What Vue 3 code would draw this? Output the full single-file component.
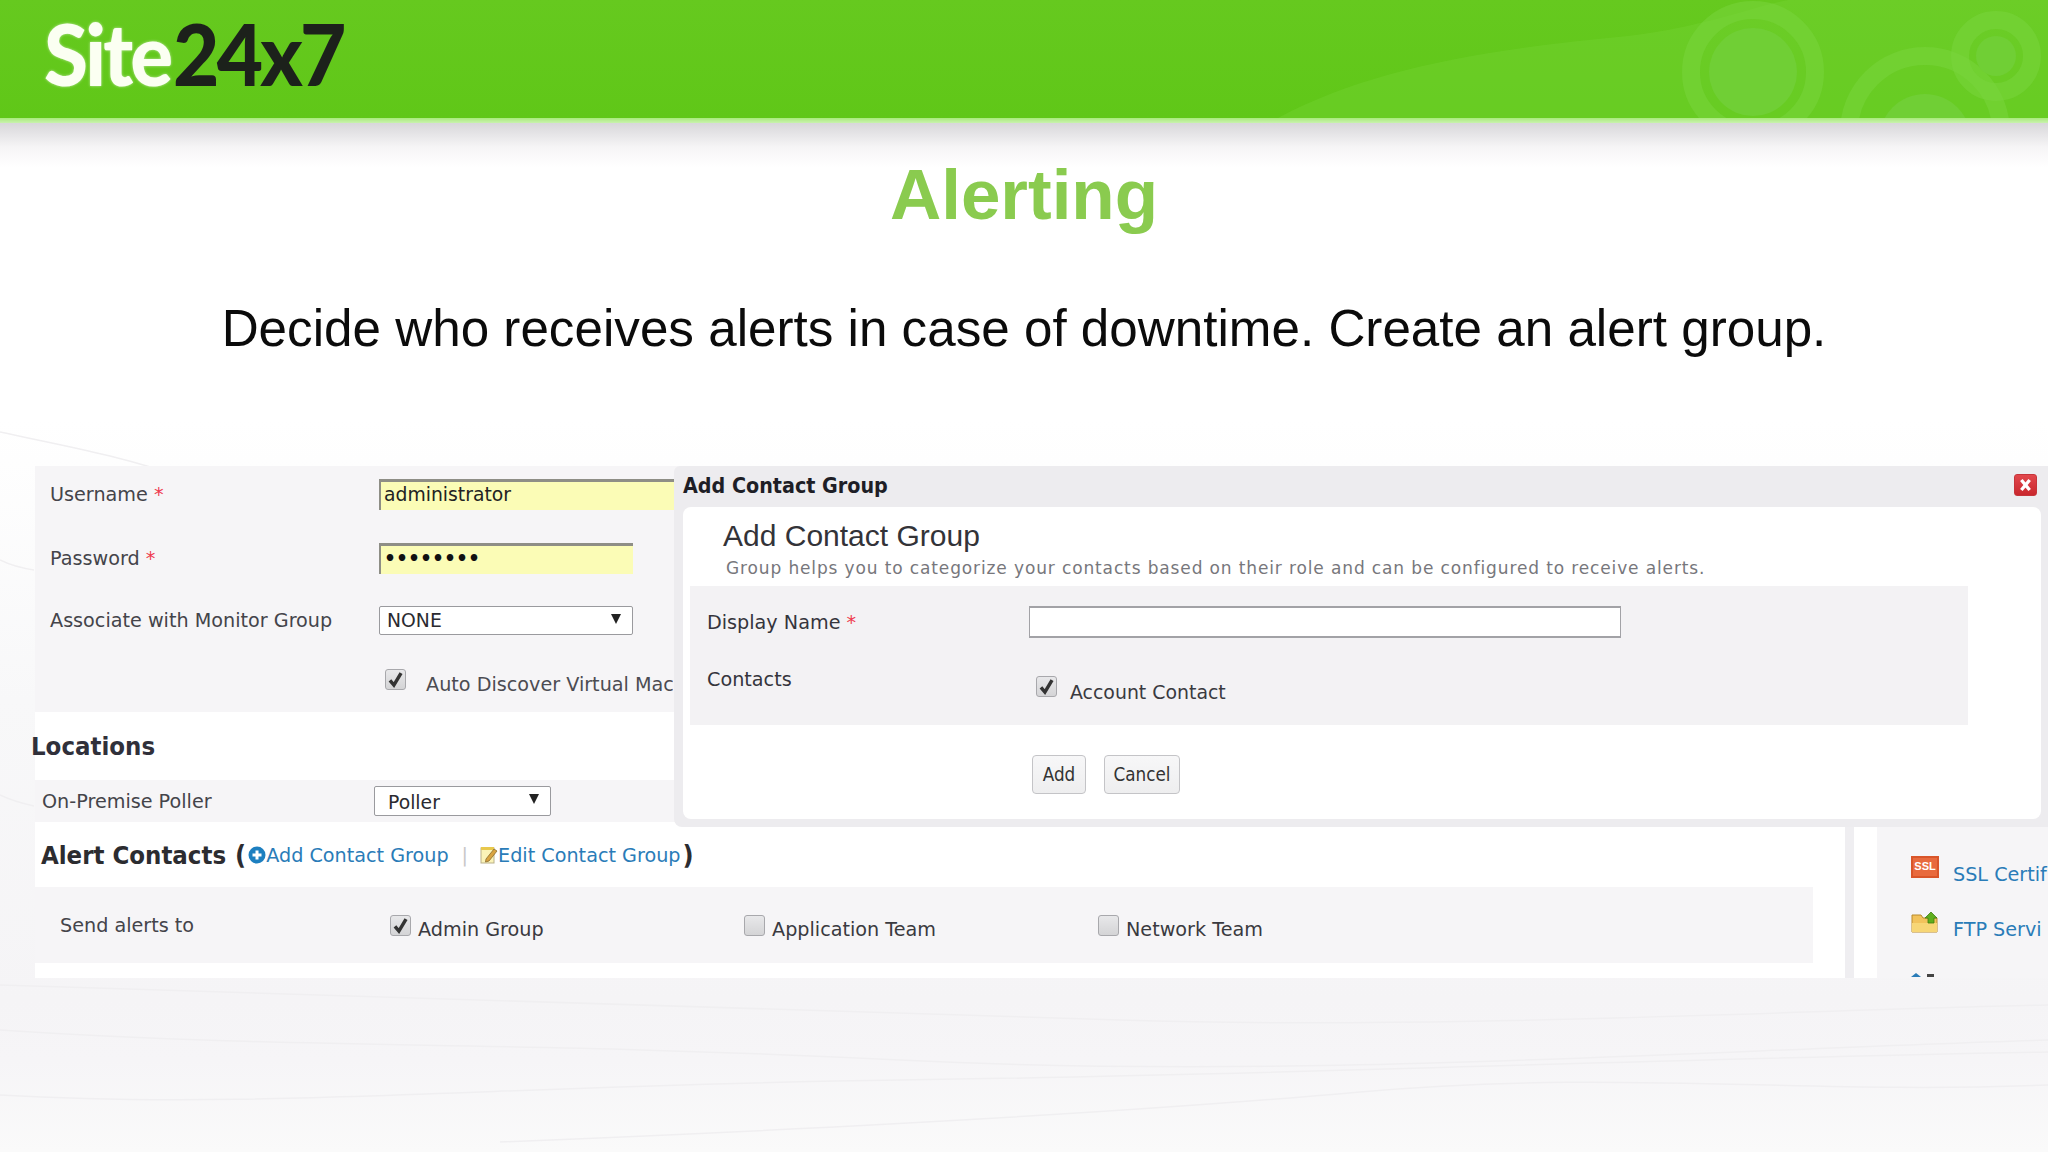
<script setup>
const alertGroups = [
  { name: 'Admin Group', checked: true, width: 354 },
  { name: 'Application Team', checked: false, width: 354 },
  { name: 'Network Team', checked: false, width: 300 }
]
</script>

<template>
  <div class="page">
    <svg class="streaks" viewBox="0 0 2048 1152" preserveAspectRatio="none" aria-hidden="true">
      <path d="M0 432 C60 445 120 455 190 480" />
      <path d="M0 560 C10 565 20 568 34 570" />
      <path d="M0 795 C10 800 20 803 34 806" />
      <path d="M0 1030 C300 1050 500 1040 900 1060 S1700 1050 2048 1040" />
      <path d="M0 1095 C260 1110 500 1085 900 1080 S1600 1060 2048 1052" />
      <path d="M500 1142 C800 1130 1100 1115 1360 1092 S1800 1095 2048 1085" />
      <path d="M0 985 C400 1000 800 1010 1120 1020 S1800 1010 2048 1005" />
    </svg>

    <header class="banner">
      <svg class="swirl" viewBox="0 0 900 118" preserveAspectRatio="none" aria-hidden="true">
        <path class="wash" d="M130 118 C220 70 330 50 480 36 C560 26 600 8 640 0 L900 0 L900 118 Z" />
        <circle class="ring-dark" cx="605" cy="72" r="62" />
        <circle class="ring-light" cx="605" cy="72" r="44" />
        <circle class="ring-dark" cx="777" cy="132" r="76" />
        <circle class="ring-light" cx="777" cy="140" r="46" />
        <circle class="ring-dark" cx="848" cy="56" r="36" />
        <circle class="ring-light" cx="848" cy="56" r="20" />
      </svg>
      <div class="logo"><span class="logo-site">Site</span><span class="logo-num">24x7</span></div>
    </header>
    <div class="banner-line"></div>
    <div class="banner-shadow"></div>

    <h1 class="title">Alerting</h1>
    <p class="lead">Decide who receives alerts in case of downtime. Create an alert group.</p>

    <section class="app">
      <div class="main">
        <div class="fields">
          <div class="field-row row-user">
            <label>Username <em>*</em></label>
            <input class="text-in autofill wide" value="administrator" readonly />
          </div>
          <div class="field-row row-pass">
            <label>Password <em>*</em></label>
            <input class="text-in autofill dots" value="••••••••" readonly />
          </div>
          <div class="field-row row-group">
            <label>Associate with Monitor Group</label>
            <div class="select select-none"><span>NONE</span><i class="caret"></i></div>
          </div>
          <div class="field-row row-auto">
            <span></span>
            <div class="check-line">
              <span class="cb on"><svg viewBox="0 0 12 12"><path d="M2.5 6.5 L5 9.5 L9.5 2" /></svg></span>
              <span class="auto-text">Auto Discover Virtual Mac</span>
            </div>
          </div>
        </div>

        <h2 class="locations">Locations</h2>
        <div class="poller-row">
          <label>On-Premise Poller</label>
          <div class="select select-poller"><span>Poller</span><i class="caret"></i></div>
        </div>

        <div class="alert-head">
          <h2>Alert Contacts</h2>
          <span class="paren open">(</span>
          <svg class="ic-add" viewBox="0 0 18 18"><circle cx="9" cy="9" r="8.5" fill="#1d7fc0" /><path d="M9 4.5v9M4.5 9h9" stroke="#fff" stroke-width="3" /></svg>
          <a>Add Contact Group</a>
          <span class="pipe">|</span>
          <svg class="ic-edit" viewBox="0 0 18 18">
            <rect x="1" y="2" width="13" height="15" fill="#fbf3b8" stroke="#b9b08a" />
            <rect x="1" y="1" width="13" height="3" fill="#e8c84c" />
            <path d="M6 13 L14 3 L17 5 L9 15 L5.5 16 Z" fill="#d9a441" stroke="#8a6b2c" stroke-width=".8" />
          </svg>
          <a>Edit Contact Group</a>
          <span class="paren close">)</span>
        </div>

        <div class="send-row">
          <label>Send alerts to</label>
          <div v-for="g in alertGroups" :key="g.name" class="send-opt" :style="{ width: g.width + 'px' }">
            <span class="cb" :class="{ on: g.checked }">
              <svg v-if="g.checked" viewBox="0 0 12 12"><path d="M2.5 6.5 L5 9.5 L9.5 2" /></svg>
            </span>
            <span class="send-name">{{ g.name }}</span>
          </div>
        </div>
      </div>

      <div class="gutter"><div class="gutter-white"></div></div>

      <aside class="side">
        <div class="side-item side-ssl">
          <span class="ssl-badge">SSL</span>
          <a>SSL Certif</a>
        </div>
        <div class="side-item side-ftp">
          <svg class="ic-ftp" viewBox="0 0 28 22">
            <path d="M1 4h9l2 3h14v14H1z" fill="#f2c35c" stroke="#b98a2a" />
            <path d="M1 12h25v9H1z" fill="#f7d676" />
            <path d="M20 1l6 6h-3v5h-6V7h-3z" fill="#5fae1d" stroke="#3f7f10" stroke-width=".8" />
          </svg>
          <a>FTP Servi</a>
        </div>
        <div class="side-bits"><i class="bit-tri"></i><i class="bit-rect"></i></div>
      </aside>

      <div class="dialog">
        <div class="dialog-bar">
          <strong>Add Contact Group</strong>
          <span class="close-btn">
            <svg viewBox="0 0 12 12"><path d="M3.5 3l5 6M8.5 3l-5 6" /></svg>
          </span>
        </div>
        <div class="dialog-body">
          <h3>Add Contact Group</h3>
          <p class="dialog-desc">Group helps you to categorize your contacts based on their role and can be configured to receive alerts.</p>
          <div class="dialog-form">
            <div class="dialog-row name-row">
              <label>Display Name <em>*</em></label>
              <input class="text-in name-in" readonly />
            </div>
            <div class="dialog-row contact-row">
              <label>Contacts</label>
              <div class="check-line account">
                <span class="cb on"><svg viewBox="0 0 12 12"><path d="M2.5 6.5 L5 9.5 L9.5 2" /></svg></span>
                <span class="account-text">Account Contact</span>
              </div>
            </div>
          </div>
          <div class="dialog-actions">
            <button class="btn add">Add</button>
            <button class="btn cancel">Cancel</button>
          </div>
        </div>
      </div>
    </section>
  </div>
</template>

<style>
html, body { margin: 0; background: #fff; }
</style>

<style scoped>
.page {
  position: relative;
  width: 2048px;
  height: 1152px;
  overflow: hidden;
  background: linear-gradient(#ffffff 0, #ffffff 420px, #f8f8f9 700px, #f5f4f6 1000px, #f6f5f7 1060px, #fafafa 1152px);
  font-family: "DejaVu Sans", Verdana, sans-serif;
  color: #3e3e44;
}
.streaks { position: absolute; inset: 0; width: 2048px; height: 1152px; }
.streaks path { fill: none; stroke: #f0eff1; stroke-width: 1.5; }

.banner {
  position: relative;
  height: 118px;
  background: linear-gradient(#66c91f, #60c718);
  overflow: hidden;
}
.swirl { position: absolute; top: 0; right: 0; width: 900px; height: 118px; }
.wash { fill: #7bd63c; opacity: .3; }
.ring-dark { fill: none; stroke: #7ad63e; stroke-width: 18; opacity: .5; }
.ring-light { fill: #70cf35; }
.logo {
  position: absolute;
  left: 44px;
  top: 11px;
  font-family: Lato, "Open Sans", sans-serif;
  font-weight: 900;
  font-size: 86px;
  line-height: 84px;
  letter-spacing: -3px;
  transform-origin: left center;
  transform: scaleX(.93);
  white-space: nowrap;
}
.logo-site { color: #fbfff2; text-shadow: 0 0 3px rgba(255,255,255,.6); }
.logo-num { color: #1c211b; margin-left: 3px; }
.banner-line { height: 5px; background: linear-gradient(#a9ea7c, #c9f2ae); }
.banner-shadow { height: 44px; background: linear-gradient(#d8d7da, #f6f5f6 55%, #fff); }

.title {
  margin: -12px 0 0;
  text-align: center;
  font-family: "Liberation Sans", Arial, sans-serif;
  font-weight: 700;
  font-size: 71px;
  line-height: 80px;
  color: #8acb4f;
}
.lead {
  margin: 63px 0 0;
  text-align: center;
  font-family: "Liberation Sans", Arial, sans-serif;
  font-size: 51.2px;
  line-height: 62px;
  color: #0b0b0b;
}

.app {
  position: absolute;
  left: 0;
  top: 466px;
  width: 2048px;
  height: 512px;
  display: flex;
}
.main {
  width: 1810px;
  margin-left: 35px;
  flex: none;
  box-sizing: border-box;
  background: #fff;
}
label { font-size: 19.2px; color: #44444a; }
label em { font-style: normal; color: #ef3a4e; }

.fields {
  height: 246px;
  background: #f6f5f7;
  display: grid;
  grid-template-rows: 56px 72px 53px 65px;
}
.field-row {
  display: grid;
  grid-template-columns: 329px 1fr;
  align-items: center;
  padding-left: 15px;
}
.row-auto { align-items: start; padding-top: 22px; }

.text-in {
  box-sizing: border-box;
  display: block;
  width: 254px;
  height: 31px;
  padding: 0 3px 2px;
  font: 18.8px "DejaVu Sans", sans-serif;
  color: #222;
  outline: none;
  border: 0;
}
.autofill {
  background: #fbfcb6;
  border-top: 3px solid #8e8e86;
  border-left: 2px solid #8e8e86;
}
.dots { font-weight: 700; color: #111; }
.wide { width: 300px; }
.select {
  box-sizing: border-box;
  position: relative;
  background: #fff;
  border: 1px solid #9a9a9e;
  border-radius: 2px;
  font-size: 18.8px;
  color: #2a2a30;
  display: flex;
  align-items: center;
}
.select-none { width: 254px; height: 29px; padding-left: 7px; }
.select-poller { width: 177px; height: 30px; padding: 3px 0 0 13px; }
.caret {
  position: absolute;
  right: 11px;
  top: 7px;
  width: 0;
  height: 0;
  border-left: 5px solid transparent;
  border-right: 5px solid transparent;
  border-top: 10px solid #222;
}
.check-line { display: flex; align-items: flex-start; }
.row-auto .check-line { margin-left: 6px; overflow: hidden; width: 288px; white-space: nowrap; }
.auto-text { margin-left: 20px; font-size: 19.2px; margin-top: 4px; color: #4c4c52; }
.cb {
  box-sizing: border-box;
  flex: none;
  display: block;
  width: 21px;
  height: 21px;
  border: 1px solid #a8a8ac;
  border-radius: 3px;
  background: linear-gradient(#e8e8ea, #d4d4d6);
}
.cb svg { display: block; width: 100%; height: 100%; }
.cb path { fill: none; stroke: #333; stroke-width: 2.2; }

.locations {
  margin: 0 0 0 -4px;
  height: 68px;
  font-family: "DejaVu Sans Condensed", "DejaVu Sans", sans-serif;
  font-size: 25.5px;
  font-weight: 700;
  line-height: 68px;
  color: #30303a;
}
.poller-row {
  height: 42px;
  display: grid;
  grid-template-columns: 332px 1fr;
  align-items: center;
  padding-left: 7px;
  background: #f6f5f7;
}
.alert-head {
  height: 65px;
  display: flex;
  align-items: center;
  padding-left: 6px;
  font-size: 19.2px;
}
.alert-head h2 {
  margin: 0;
  font-family: "DejaVu Sans Condensed", "DejaVu Sans", sans-serif;
  font-size: 25.5px;
  font-weight: 700;
  color: #2c2c30;
}
.paren { font-family: "DejaVu Sans Condensed", "DejaVu Sans", sans-serif; font-size: 27px; font-weight: 700; color: #2c2c30; }
.paren.open { margin-left: 9px; }
.paren.close { margin-left: 2px; }
.alert-head a { color: #2a7cb8; padding-top: 2px; }
.ic-add { width: 18px; height: 18px; margin-left: 2px; }
.ic-edit { width: 18px; height: 18px; flex: none; }
.pipe { color: #c8c8c8; margin: 0 12px 0 13px; padding-top: 2px; }

.send-row {
  width: 1778px;
  height: 76px;
  background: #f6f5f7;
  display: flex;
  align-items: flex-start;
  padding-top: 28px;
  box-sizing: border-box;
  padding-left: 25px;
}
.send-row label { width: 330px; flex: none; line-height: 22px; }
.send-opt { display: flex; flex: none; align-items: flex-start; }
.send-name { margin-left: 7px; font-size: 19.2px; margin-top: 3px; color: #3a3a40; }

.gutter {
  flex: none;
  width: 32px;
  box-sizing: border-box;
  padding-left: 9px;
  background: #efeef1;
}
.gutter-white { height: 100%; background: #fff; }
.side {
  flex: 1;
  min-width: 0;
  box-sizing: border-box;
  background: #f6f5f7;
  padding: 388px 0 0 34px;
  overflow: hidden;
}
.side-item { display: flex; align-items: center; white-space: nowrap; }
.side-item a { color: #2a7cb8; font-size: 19.2px; }
.side-ssl { height: 40px; }
.side-ftp { height: 40px; margin-top: 15px; }
.ssl-badge {
  flex: none;
  display: block;
  box-sizing: border-box;
  width: 28px;
  height: 22px;
  margin: -14px 14px 0 0;
  background: #e86a3e;
  border: 2px solid #d9552a;
  color: #fff;
  font: 700 11px/17px "Liberation Sans", sans-serif;
  text-align: center;
}
.ic-ftp { flex: none; width: 28px; height: 22px; margin: -14px 14px 0 0; }
.side-bits { display: flex; gap: 6px; align-items: flex-end; margin-top: 24px; }
.bit-tri { width: 0; height: 0; border-left: 5px solid transparent; border-right: 5px solid transparent; border-bottom: 4px solid #2a7cb8; }
.bit-rect { width: 7px; height: 3px; background: #444; }

.dialog {
  position: absolute;
  left: 674px;
  top: 0;
  width: 1374px;
  height: 361px;
  background: #edecef;
  border-radius: 6px 0 0 8px;
  box-sizing: border-box;
  padding: 0 7px 8px 9px;
  display: flex;
  flex-direction: column;
}
.dialog-bar {
  height: 41px;
  flex: none;
  box-sizing: border-box;
  padding-bottom: 3px;
  display: flex;
  align-items: center;
  justify-content: space-between;
}
.dialog-bar strong {
  font-family: "DejaVu Sans Condensed", "DejaVu Sans", sans-serif;
  font-size: 21.3px;
  color: #1e1e26;
}
.close-btn {
  display: block;
  width: 23px;
  height: 22px;
  margin-right: 4px;
  background: linear-gradient(#e2474c, #c9272d);
  border: 1px solid #c6343a;
  border-radius: 3px;
  box-sizing: border-box;
}
.close-btn svg { display: block; width: 100%; height: 100%; }
.close-btn path { stroke: #fff; stroke-width: 2; fill: none; }
.dialog-body {
  flex: 1;
  background: #fff;
  border-radius: 8px;
  padding: 0 7px;
  min-height: 0;
}
.dialog-body h3 {
  margin: 0;
  padding: 11px 0 0 33px;
  font-family: "Liberation Sans", Arial, sans-serif;
  font-weight: 400;
  font-size: 30px;
  line-height: 36px;
  color: #333338;
}
.dialog-desc {
  margin: 0;
  padding: 3px 0 0 36px;
  font-size: 17px;
  letter-spacing: .87px;
  line-height: 22px;
  color: #77777c;
  white-space: nowrap;
}
.dialog-form {
  width: 1278px;
  height: 139px;
  margin-top: 7px;
  background: #f3f2f4;
  padding-left: 17px;
  box-sizing: border-box;
}
.dialog-row { display: grid; grid-template-columns: 322px 1fr; }
.dialog-row label { color: #35353c; }
.name-row { height: 72px; align-items: center; }
.name-in {
  width: 592px;
  height: 32px;
  background: #fff;
  border: 2px solid #a2a2a6;
  border-width: 2px 1.5px;
}
.contact-row { align-items: start; padding-top: 10px; }
.account { margin: 8px 0 0 7px; }
.account-text { margin-left: 13px; margin-top: 5px; font-size: 18.9px; color: #3a3a40; }
.dialog-actions {
  display: flex;
  gap: 18px;
  padding: 30px 0 0 342px;
}
.btn {
  height: 39px;
  background: linear-gradient(#f7f7f8, #eeeeef);
  border: 1px solid #c4c4c7;
  border-radius: 4px;
  font: 18.7px "DejaVu Sans Condensed", "DejaVu Sans", sans-serif;
  color: #333;
  padding: 0;
}
.add { width: 54px; }
.cancel { width: 76px; }
</style>
